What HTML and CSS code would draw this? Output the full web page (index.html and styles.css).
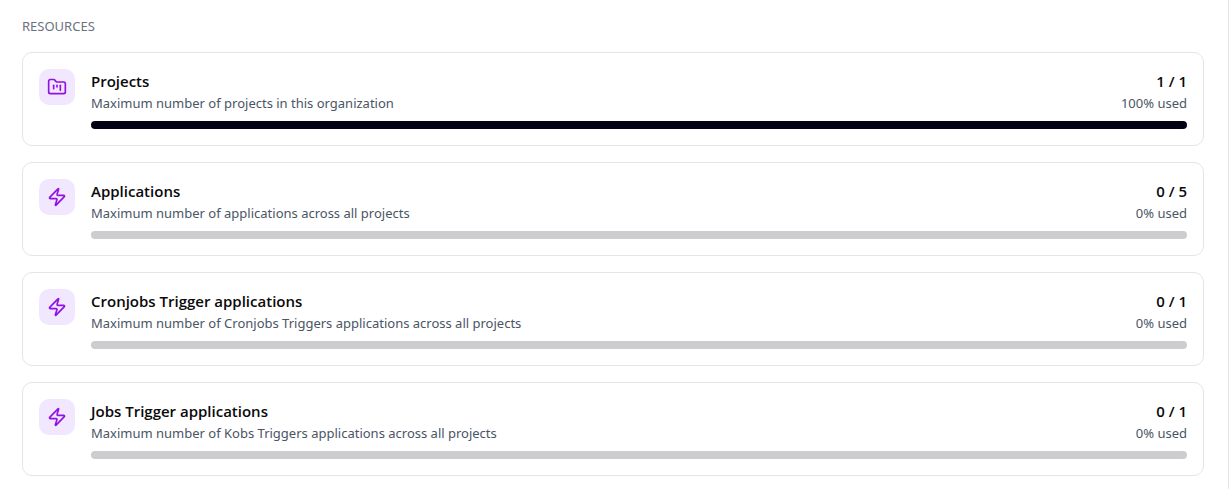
FILE: index.html
```html
<!DOCTYPE html>
<html lang="en">
<head>
<meta charset="UTF-8">
<meta name="viewport" content="width=device-width, initial-scale=1.0">
<title>Resources</title>
<link rel="stylesheet" href="styles.css">
</head>
<body>
  <main class="panel">
    <h2 class="panel-title">RESOURCES</h2>
    <div class="cards">
      <section class="card">
        <div class="icon">
          <svg viewBox="0 0 24 24"><path d="M4 20h16a2 2 0 0 0 2-2V8a2 2 0 0 0-2-2h-7.93a2 2 0 0 1-1.66-.9l-.82-1.2A2 2 0 0 0 7.93 3H4a2 2 0 0 0-2 2v13c0 1.1.9 2 2 2Z"/><path d="M8 10v4"/><path d="M12 10v2"/><path d="M16 10v6"/></svg>
        </div>
        <div class="info">
          <div class="row">
            <h3 class="name">Projects</h3>
            <span class="count">1 / 1</span>
          </div>
          <div class="row">
            <p class="desc">Maximum number of projects in this organization</p>
            <span class="used">100% used</span>
          </div>
          <div class="bar"><div class="fill" style="width: 100%"></div></div>
        </div>
      </section>
      <section class="card">
        <div class="icon">
          <svg viewBox="0 0 24 24"><path d="M4 14a1 1 0 0 1-.78-1.63l9.9-10.2a.5.5 0 0 1 .86.46l-1.92 6.02A1 1 0 0 0 13 10h7a1 1 0 0 1 .78 1.63l-9.9 10.2a.5.5 0 0 1-.86-.46l1.92-6.02A1 1 0 0 0 11 14z"/></svg>
        </div>
        <div class="info">
          <div class="row">
            <h3 class="name">Applications</h3>
            <span class="count">0 / 5</span>
          </div>
          <div class="row">
            <p class="desc">Maximum number of applications across all projects</p>
            <span class="used">0% used</span>
          </div>
          <div class="bar"><div class="fill" style="width: 0%"></div></div>
        </div>
      </section>
      <section class="card">
        <div class="icon">
          <svg viewBox="0 0 24 24"><path d="M4 14a1 1 0 0 1-.78-1.63l9.9-10.2a.5.5 0 0 1 .86.46l-1.92 6.02A1 1 0 0 0 13 10h7a1 1 0 0 1 .78 1.63l-9.9 10.2a.5.5 0 0 1-.86-.46l1.92-6.02A1 1 0 0 0 11 14z"/></svg>
        </div>
        <div class="info">
          <div class="row">
            <h3 class="name">Cronjobs Trigger applications</h3>
            <span class="count">0 / 1</span>
          </div>
          <div class="row">
            <p class="desc">Maximum number of Cronjobs Triggers applications across all projects</p>
            <span class="used">0% used</span>
          </div>
          <div class="bar"><div class="fill" style="width: 0%"></div></div>
        </div>
      </section>
      <section class="card">
        <div class="icon">
          <svg viewBox="0 0 24 24"><path d="M4 14a1 1 0 0 1-.78-1.63l9.9-10.2a.5.5 0 0 1 .86.46l-1.92 6.02A1 1 0 0 0 13 10h7a1 1 0 0 1 .78 1.63l-9.9 10.2a.5.5 0 0 1-.86-.46l1.92-6.02A1 1 0 0 0 11 14z"/></svg>
        </div>
        <div class="info">
          <div class="row">
            <h3 class="name">Jobs Trigger applications</h3>
            <span class="count">0 / 1</span>
          </div>
          <div class="row">
            <p class="desc">Maximum number of Kobs Triggers applications across all projects</p>
            <span class="used">0% used</span>
          </div>
          <div class="bar"><div class="fill" style="width: 0%"></div></div>
        </div>
      </section>
    </div>
  </main>
</body>
</html>
```
FILE: styles.css
```css
* { box-sizing: border-box; }
body { margin: 0; background-color: #fff; color: #0a0a0a; font-family: "Noto Sans", "Open Sans", sans-serif; font-size: 13px; line-height: 20px; }
h2, h3, p { margin: 0; }
.panel { min-height: 100vh; padding: 16px 24px 13px 22px; border-right: 1px solid #e5e5e5; }
.panel-title { margin-bottom: 16px; font-size: 13px; font-weight: 400; color: #6a7282; }
.cards { display: flex; flex-direction: column; gap: 16px; }
.card { display: flex; align-items: flex-start; gap: 16px; padding: 16px; border: 1px solid #e5e5e5; border-radius: 10px; }
.icon { display: flex; padding: 8px; border-radius: 10px; background-color: #f1e7fe; }
.icon svg { width: 20px; height: 20px; fill: none; stroke: #9212e2; stroke-width: 2; stroke-linecap: round; stroke-linejoin: round; }
.info { flex: 1; min-width: 0; }
.row { display: flex; justify-content: space-between; gap: 16px; }
.name, .count { font-family: "Open Sans", "Noto Sans", sans-serif; font-size: 15px; font-weight: 600; line-height: 24px; }
.count { white-space: nowrap; }
.desc, .used { color: #4a5565; }
.used { white-space: nowrap; }
.bar { height: 8px; margin-top: 8px; border-radius: 4px; background-color: #cdcdd0; overflow: hidden; }
.fill { height: 100%; background-color: #030213; }
```
